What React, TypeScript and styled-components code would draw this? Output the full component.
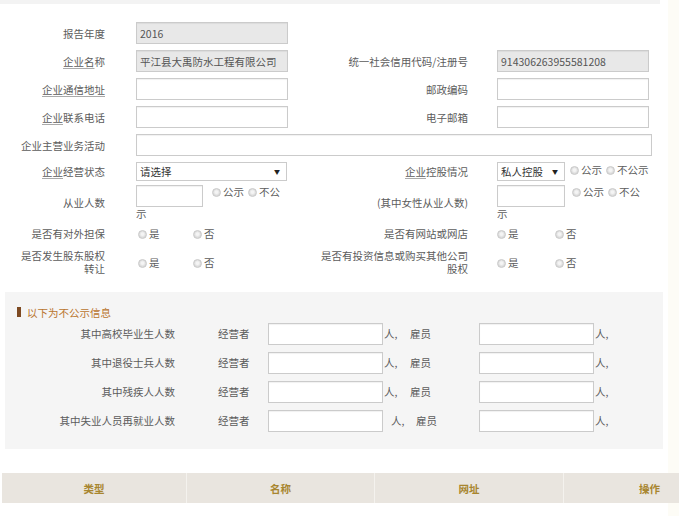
import styled, { createGlobalStyle } from 'styled-components';

const GlobalStyle = createGlobalStyle`
  html, body {
    margin: 0;
    padding: 0;
    overflow: hidden;
    background: #fdfcf6;
  }
  body {
    font-family: "Noto Sans CJK SC", "Noto Sans", sans-serif;
    font-size: 10.5px;
    color: #5c5c5c;
  }
`;

// White page sheet; the table below is allowed to run past its right edge
const Page = styled.div`
  width: 668px;
  min-height: 516px;
  background: #fff;
`;

const TopBand = styled.div`
  height: 4px;
  width: 660px;
  background: #f3f3f3;
`;

const Form = styled.div`
  padding-top: 15px;
`;

// One row of the basic info form: label | field | label | field
const Row = styled.div<{ $h: number }>`
  display: grid;
  grid-template-columns: 105px 183px 180px 211px;
  align-items: center;
  height: ${({ $h }) => $h}px;
`;

const Label = styled.div<{ $pl?: number }>`
  text-align: right;
  line-height: 13px;
  padding-left: ${({ $pl }) => $pl ?? 0}px;
  color: #5c5c5c;
`;

const Field = styled.div<{ $pl?: number; $w?: number; $span?: boolean }>`
  box-sizing: content-box;
  padding-left: ${({ $pl }) => $pl ?? 31}px;
  line-height: 13px;
  white-space: ${({ $w }) => ($w ? 'normal' : 'nowrap')};
  ${({ $w }) => ($w ? `width: ${$w}px;` : '')}
  ${({ $span }) => ($span ? 'grid-column: 2 / 5;' : '')}
`;

const Input = styled.input<{ $w?: number; $readonly?: boolean }>`
  box-sizing: border-box;
  width: ${({ $w }) => $w ?? 152}px;
  height: 22px;
  margin: 0;
  padding: 0 3px;
  border: 1px solid #cbcbcb;
  box-shadow: inset 0 1px 1px rgba(0, 0, 0, 0.06);
  background: ${({ $readonly }) => ($readonly ? '#e8e8e8' : '#fff')};
  font-family: "Noto Sans CJK SC", "Liberation Sans", sans-serif;
  font-size: 10.5px;
  color: #555;
  vertical-align: top;
  outline: none;
`;

const SelectWrap = styled.span<{ $w: number }>`
  position: relative;
  display: inline-block;
  width: ${({ $w }) => $w}px;
  height: 19px;
  vertical-align: middle;
  margin-right: 5px;
`;

const Select = styled.select`
  appearance: none;
  box-sizing: border-box;
  width: 100%;
  height: 19px;
  margin: 0;
  padding: 0 3px;
  border: 1px solid #cbcbcb;
  background: #fff;
  font-family: "Noto Sans CJK SC", sans-serif;
  font-size: 10.5px;
  color: #333;
  outline: none;
`;

// the dropdown triangle sits over the select's right end
const Arrow = styled.span`
  position: absolute;
  right: 7px;
  top: 6px;
  font-size: 6px;
  line-height: 7px;
  color: #222;
  pointer-events: none;
`;

const RadioItem = styled.span<{ $w?: number }>`
  display: inline-block;
  ${({ $w }) => ($w ? `width: ${$w}px;` : '')}
`;

const Dot = styled.span`
  display: inline-block;
  box-sizing: border-box;
  width: 9px;
  height: 9px;
  margin-right: 2px;
  border: 1px solid #c9c9c9;
  border-radius: 50%;
  background: radial-gradient(circle at 50% 45%, #f4f4f4 0 25%, #dcdcdc 60%);
  vertical-align: -1px;
`;

const Gap = styled.span<{ $w: number }>`
  display: inline-block;
  width: ${({ $w }) => $w}px;
`;

const Uline = styled.span`
  text-decoration: underline;
  text-decoration-color: #aaa;
  text-underline-offset: 2px;
`;

// Non-public info block
const Section = styled.div`
  margin: 13px 0 0 5px;
  width: 658px;
  background: #f5f5f5;
  padding: 13px 0 14px;
`;

const SectionTitle = styled.div`
  display: flex;
  align-items: center;
  padding-left: 12px;
  height: 14px;
  color: #b9742e;
`;

const Marker = styled.span`
  width: 4px;
  height: 10px;
  background: #7d4a22;
  margin-right: 6px;
`;

const PRow = styled.div`
  display: grid;
  grid-template-columns: 170px 43px 50px 115px 27px 69px 115px auto;
  align-items: center;
  height: 29px;
`;

const PLabel = styled.div`
  text-align: right;
`;

const Unit = styled.span<{ $ml?: number }>`
  padding-left: ${({ $ml }) => $ml ?? 1}px;
  white-space: nowrap;
`;

const Table = styled.div`
  margin: 24px 0 0 2px;
  width: 733px;
  display: grid;
  grid-template-columns: 184px 188px 189px 172px;
  height: 30px;
  background: #e9e5df;
`;

const Th = styled.div<{ $first?: boolean }>`
  display: flex;
  align-items: center;
  justify-content: center;
  border-left: ${({ $first }) => ($first ? 'none' : '1px solid #f4f2ee')};
  color: #a8862f;
  font-weight: bold;
`;

const Radios = ({ w1, w2 }: { w1: number; w2: number }) => (
  <>
    <RadioItem $w={w1}>
      <Dot />是
    </RadioItem>
    <RadioItem $w={w2}>
      <Dot />否
    </RadioItem>
  </>
);

const PublicRadios = () => (
  <>
    <Dot />公示<Gap $w={4} />
    <Dot />不公示
  </>
);

const nonPublic = [
  { label: '其中高校毕业生人数', ml: 1 },
  { label: '其中退役士兵人数', ml: 1 },
  { label: '其中残疾人人数', ml: 1 },
  { label: '其中失业人员再就业人数', ml: 8 },
];

const App = () => {
  return (
    <>
      <GlobalStyle />
      <Page>
        <TopBand />
        <Form>
          <Row $h={28}>
            <Label>报告年度</Label>
            <Field>
              <Input $readonly readOnly defaultValue="2016" />
            </Field>
          </Row>
          <Row $h={28}>
            <Label><Uline>企业名</Uline>称</Label>
            <Field>
              <Input $readonly readOnly defaultValue="平江县大禹防水工程有限公司" />
            </Field>
            <Label $pl={30}>统一社会信用代码/注册号</Label>
            <Field $pl={29}>
              <Input $readonly readOnly defaultValue="914306263955581208" />
            </Field>
          </Row>
          <Row $h={28}>
            <Label><Uline>企业通信地址</Uline></Label>
            <Field>
              <Input />
            </Field>
            <Label $pl={30}>邮政编码</Label>
            <Field $pl={29}>
              <Input />
            </Field>
          </Row>
          <Row $h={28}>
            <Label><Uline>企业</Uline>联系电话</Label>
            <Field>
              <Input />
            </Field>
            <Label $pl={30}>电子邮箱</Label>
            <Field $pl={29}>
              <Input />
            </Field>
          </Row>
          <Row $h={28}>
            <Label $pl={17}>企业主营业务活动</Label>
            <Field $span>
              <Input $w={516} />
            </Field>
          </Row>
          <Row $h={24}>
            <Label><Uline>企业</Uline>经营状态</Label>
            <Field>
              <SelectWrap $w={151}>
                <Select defaultValue="">
                  <option value="">请选择</option>
                </Select>
                <Arrow>▼</Arrow>
              </SelectWrap>
            </Field>
            <Label $pl={30}><Uline>企业</Uline>控股情况</Label>
            <Field $pl={29}>
              <SelectWrap $w={68}>
                <Select defaultValue="private">
                  <option value="private">私人控股</option>
                </Select>
                <Arrow>▼</Arrow>
              </SelectWrap>
              <PublicRadios />
            </Field>
          </Row>
          <Row $h={38}>
            <Label>从业人数</Label>
            <Field $w={150}>
              <Input $w={67} />
              <Gap $w={9} />
              <PublicRadios />
            </Field>
            <Label $pl={30}>(其中女性从业人数)</Label>
            <Field $pl={29} $w={150}>
              <Input $w={68} />
              <Gap $w={7} />
              <PublicRadios />
            </Field>
          </Row>
          <Row $h={24}>
            <Label>是否有对外担保</Label>
            <Field $pl={33}>
              <Radios w1={55} w2={55} />
            </Field>
            <Label $pl={30}>是否有网站或网店</Label>
            <Field $pl={29}>
              <Radios w1={58} w2={58} />
            </Field>
          </Row>
          <Row $h={34}>
            <Label $pl={17}>是否发生股东股权转让</Label>
            <Field $pl={33}>
              <Radios w1={55} w2={55} />
            </Field>
            <Label $pl={30}>是否有投资信息或购买其他公司股权</Label>
            <Field $pl={29}>
              <Radios w1={58} w2={58} />
            </Field>
          </Row>
        </Form>

        <Section>
          <SectionTitle>
            <Marker />
            以下为不公示信息
          </SectionTitle>
          {nonPublic.map((r) => (
            <PRow key={r.label}>
              <PLabel>{r.label}</PLabel>
              <span />
              <span>经营者</span>
              <Input $w={115} />
              <Unit $ml={r.ml}>人,</Unit>
              <Unit $ml={r.ml === 1 ? 0 : 6}>雇员</Unit>
              <Input $w={115} />
              <Unit>人,</Unit>
            </PRow>
          ))}
        </Section>

        <Table>
          <Th $first>类型</Th>
          <Th>名称</Th>
          <Th>网址</Th>
          <Th>操作</Th>
        </Table>
      </Page>
    </>
  );
};

export default App;
